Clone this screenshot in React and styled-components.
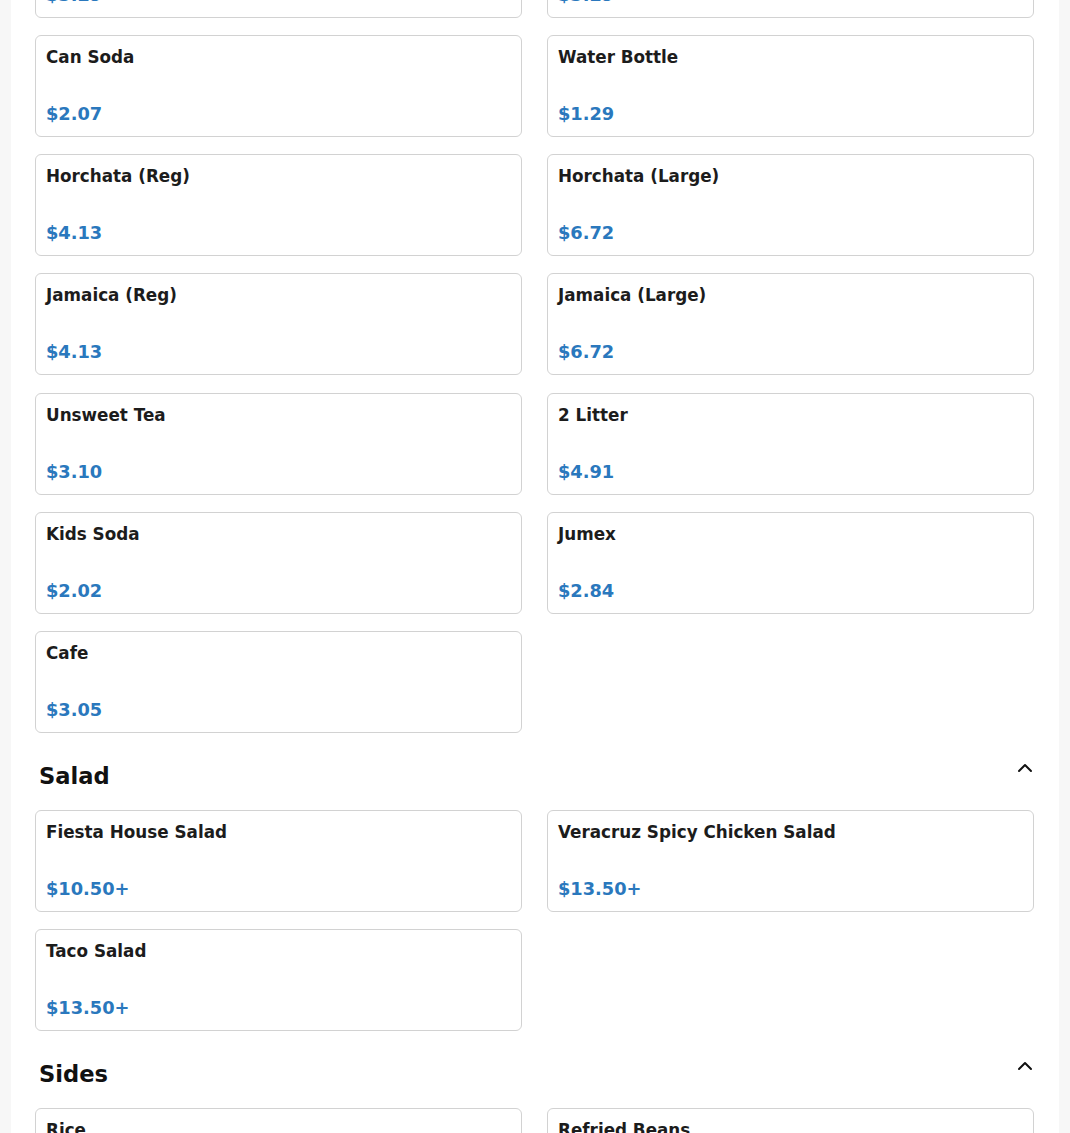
import styled, { createGlobalStyle } from "styled-components";
import { ChevronUp } from "lucide-react";

const GlobalStyle = createGlobalStyle`
  html, body {
    margin: 0;
    padding: 0;
    background: #f7f7f7;
    font-family: "DejaVu Sans", Verdana, sans-serif;
  }
`;

const drinks = [
  { name: "Fountain Drink", price: "$3.29" },
  { name: "Bottled Soda", price: "$3.29" },
  { name: "Can Soda", price: "$2.07" },
  { name: "Water Bottle", price: "$1.29" },
  { name: "Horchata (Reg)", price: "$4.13" },
  { name: "Horchata (Large)", price: "$6.72" },
  { name: "Jamaica (Reg)", price: "$4.13" },
  { name: "Jamaica (Large)", price: "$6.72" },
  { name: "Unsweet Tea", price: "$3.10" },
  { name: "2 Litter", price: "$4.91" },
  { name: "Kids Soda", price: "$2.02" },
  { name: "Jumex", price: "$2.84" },
  { name: "Cafe", price: "$3.05" },
];

const salads = [
  { name: "Fiesta House Salad", price: "$10.50+" },
  { name: "Veracruz Spicy Chicken Salad", price: "$13.50+" },
  { name: "Taco Salad", price: "$13.50+" },
];

const sides = [
  { name: "Rice", price: "$3.50" },
  { name: "Refried Beans", price: "$3.50" },
];

const Section = ({ title, items }) => (
  <SectionWrap>
    {title && (
      <SectionHead>
        <SectionTitle>{title}</SectionTitle>
        <ChevronUp size={24} strokeWidth={2} color="#111" />
      </SectionHead>
    )}
    <Grid>
      {items.map((it) => (
        <Card key={it.name}>
          <ItemName>{it.name}</ItemName>
          <Price>{it.price}</Price>
        </Card>
      ))}
    </Grid>
  </SectionWrap>
);

export default function App() {
  return (
    <>
      <GlobalStyle />
      <Panel>
        <Section items={drinks} />
        <Section title="Salad" items={salads} />
        <Section title="Sides" items={sides} />
      </Panel>
    </>
  );
}

const Panel = styled.div`
  margin: -84.2px 11px 0;
  padding: 0 25px 40px 24px;
  background: #fff;
  min-height: 1300px;
`;

const SectionWrap = styled.section`
  display: flex;
  flex-direction: column;
`;

const SectionHead = styled.div`
  display: flex;
  justify-content: space-between;
  align-items: flex-start;
  padding: 23px 0 0 4px;
  margin-right: -3px;
  height: 77px;
  box-sizing: border-box;
`;

const SectionTitle = styled.h2`
  margin: 7px 0 0;
  font-size: 22.6px;
  line-height: 27px;
  font-weight: 700;
  color: #111;
`;

const Grid = styled.div`
  display: grid;
  grid-template-columns: 1fr 1fr;
  column-gap: 25px;
  row-gap: 17.2px;
`;

const Card = styled.div`
  height: 102px;
  box-sizing: border-box;
  border: 1px solid #d2d2d2;
  border-radius: 6px;
  padding: 11px 10px 12px;
  display: flex;
  flex-direction: column;
  justify-content: space-between;
  background: #fff;
`;

const ItemName = styled.div`
  font-size: 16.8px;
  line-height: 20px;
  font-weight: 700;
  color: #1c1c1c;
`;

const Price = styled.div`
  font-size: 17.8px;
  line-height: 21px;
  font-weight: 700;
  color: #2a78bd;
`;
